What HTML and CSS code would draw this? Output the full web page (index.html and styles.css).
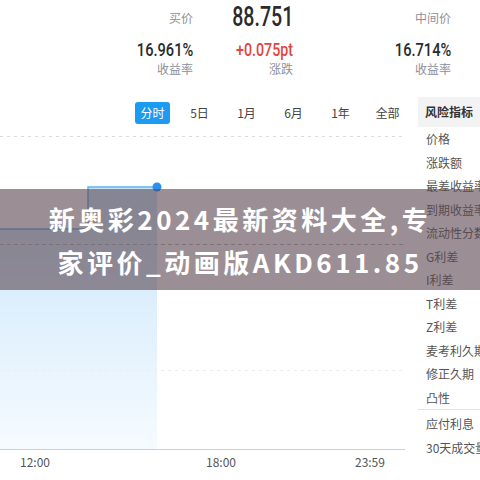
FILE: index.html
```html
<!DOCTYPE html>
<html>
<head>
<meta charset="utf-8">
<title>债券行情</title>
<link rel="stylesheet" href="styles.css">
</head>
<body>

<div class="quote">
    <div class="qcol qcol-1">
        <div class="qtop label">买价</div>
        <div class="qval"><span class="num">16.961%</span></div>
        <div class="qlab label">收益率</div>
    </div>
    <div class="qcol qcol-2">
        <div class="qtop"><span class="big">88.751</span></div>
        <div class="qval"><span class="num up">+0.075pt</span></div>
        <div class="qlab label">涨跌</div>
    </div>
    <div class="qcol qcol-3">
        <div class="qtop label">中间价</div>
        <div class="qval"><span class="num">16.714%</span></div>
        <div class="qlab label">收益率</div>
    </div>
</div>

<div class="main">
    <div class="chart">
        <ul class="tabs">
            <li class="on">分时</li>
            <li>5日</li>
            <li>1月</li>
            <li>6月</li>
            <li>1年</li>
            <li>全部</li>
        </ul>
        <svg class="plot" width="405" height="318" viewBox="0 0 405 318">
            <defs>
                <linearGradient id="fill" x1="0" y1="0" x2="0" y2="1">
                    <stop offset="0" stop-color="#c9e5fb"/>
                    <stop offset="1" stop-color="#f6fbff"/>
                </linearGradient>
            </defs>
            <line x1="0" y1="2.5" x2="405" y2="2.5" stroke="#dcdcdc" stroke-dasharray="3 4"/>
            <polygon points="0,95 88,95 88,53 157,53 157,315 0,315" fill="url(#fill)"/>
            <line x1="0" y1="110.5" x2="405" y2="110.5" stroke="#b5b5b5" stroke-dasharray="4 3"/>
            <line x1="0" y1="236.5" x2="405" y2="236.5" stroke="#ececec" stroke-dasharray="3 4"/>
            <polyline points="0,95 88,95 88,53 157,53" fill="none" stroke="#62b2ec" stroke-width="1.5"/>
            <circle cx="157" cy="53" r="4.5" fill="#2b8ff0"/>
            <line x1="0" y1="315.5" x2="405" y2="315.5" stroke="#cfcfcf"/>
        </svg>
        <div class="axis">
            <span>12:00</span>
            <span>18:00</span>
            <span>23:59</span>
        </div>
    </div>
    <div class="side">
        <div class="side-head">风险指标</div>
        <ul class="side-list">
            <li>价格</li>
            <li>涨跌额</li>
            <li>最差收益率</li>
            <li>到期收益率</li>
            <li>流动性分数</li>
            <li>G利差</li>
            <li>I利差</li>
            <li>T利差</li>
            <li>Z利差</li>
            <li>麦考利久期</li>
            <li>修正久期</li>
            <li class="split">凸性</li>
            <li>应付利息</li>
            <li>30天成交量</li>
        </ul>
    </div>
</div>

<div class="banner">新奥彩2024最新资料大全,专<br>家评价_动画版AKD611.85</div>

</body>
</html>
```

FILE: styles.css
```css
body {margin:0; background:#fff; font:12px "Noto Sans CJK SC", "Noto Sans", sans-serif; color:#333; position:relative; width:480px; height:480px; overflow:hidden;}
ul {list-style:none; margin:0; padding:0;}

/* quote header */
.quote {display:flex; height:97px;}
.qcol {display:flex; flex-direction:column; align-items:flex-end;}
.qcol-1 {width:193px;}
.qcol-2 {width:100px;}
.qcol-3 {width:158px;}
.qtop {height:36px; line-height:36px;}
.qval {height:22px; line-height:22px; margin-top:2px;}
.qlab {height:18px; line-height:18px;}
.label {color:#8d8f99;}
.big {display:inline-block; font:500 28px Roboto, sans-serif; color:#2b2b2b; transform:scaleX(0.7); transform-origin:right center;}
.num {display:inline-block; font:500 19px Roboto, sans-serif; color:#2b2b2b; transform:scaleX(0.77); transform-origin:right center;}
.num.up {color:#e2453c; transform:scaleX(0.75);}

/* chart */
.main {display:flex;}
.chart {width:418px;}
.tabs {display:flex; gap:12px; padding:5px 0 0 135px; height:22px;}
.tabs li {width:35px; height:22px; line-height:22px; text-align:center; color:#444; border-radius:3px;}
.tabs li.on {background:#1d9bf0; color:#fff;}
.plot {display:block; margin-top:10px;}
.axis {display:flex; padding-left:20px; height:20px; line-height:20px; color:#555;}
.axis span:nth-child(2) {margin-left:156px;}
.axis span:nth-child(3) {margin-left:119px;}

/* risk indicators */
.side {width:62px; overflow:hidden; white-space:nowrap;}
.side-head {height:30px; line-height:30px; padding-left:7px; background:#f3f3f3; font-weight:bold; color:#333;}
.side-list li {height:23.5px; line-height:23.5px; padding-left:8px; color:#555;}
.side-list li.split {border-bottom:1px solid #e2e2e2; margin-bottom:2px;}

/* overlay title */
.banner {position:absolute; left:0; top:189px; width:480px; height:101px; box-sizing:border-box; padding-top:8px; background:rgba(88,68,78,0.6); color:#fff; text-align:center; font:bold 26px/43px "Noto Sans CJK SC", "Noto Sans", sans-serif; letter-spacing:3.5px;}
```
